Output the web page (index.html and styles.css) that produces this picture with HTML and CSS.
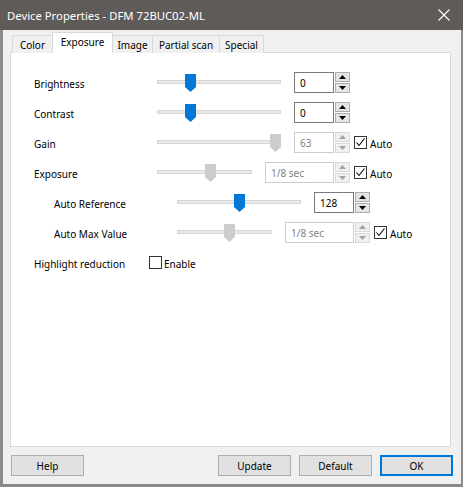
FILE: index.html
```html
<!DOCTYPE html>
<html>
<head>
<meta charset="utf-8">
<link rel="stylesheet" href="styles.css">
</head>
<body>
<div class="window">
  <div class="titlebar">
    <span class="title">Device Properties - DFM 72BUC02-ML</span>
    <svg class="close" width="12" height="12" viewBox="0 0 12 12"><path d="M0.5 0.5L11.5 11.5M11.5 0.5L0.5 11.5" stroke="#fff" stroke-width="1.1" fill="none"/></svg>
  </div>
  <div class="client">
    <div class="tabs">
      <div class="tab t-color">Color</div>
      <div class="tab t-exposure active">Exposure</div>
      <div class="tab t-image">Image</div>
      <div class="tab t-partial">Partial scan</div>
      <div class="tab t-special">Special</div>
    </div>
    <div class="panel">
      <div class="rows">
        <div class="row">
          <span class="label">Brightness</span>
          <div class="slider long"><div class="track"></div><svg class="thumb" style="left:28px" width="11" height="18" viewBox="0 0 11 18"><path d="M0 0H11V13L5.5 18L0 13Z" fill="#0078d7"/></svg></div>
          <div class="edit num">0</div>
          <div class="spin"><div class="sb"><svg width="7" height="4" viewBox="0 0 7 4"><path d="M0 4L3.5 0L7 4Z"/></svg></div><div class="sb"><svg width="7" height="4" viewBox="0 0 7 4"><path d="M0 0L3.5 4L7 0Z"/></svg></div></div>
        </div>
        <div class="row">
          <span class="label">Contrast</span>
          <div class="slider long"><div class="track"></div><svg class="thumb" style="left:28px" width="11" height="18" viewBox="0 0 11 18"><path d="M0 0H11V13L5.5 18L0 13Z" fill="#0078d7"/></svg></div>
          <div class="edit num">0</div>
          <div class="spin"><div class="sb"><svg width="7" height="4" viewBox="0 0 7 4"><path d="M0 4L3.5 0L7 4Z"/></svg></div><div class="sb"><svg width="7" height="4" viewBox="0 0 7 4"><path d="M0 0L3.5 4L7 0Z"/></svg></div></div>
        </div>
        <div class="row">
          <span class="label">Gain</span>
          <div class="slider long"><div class="track"></div><svg class="thumb" style="left:113px" width="11" height="18" viewBox="0 0 11 18"><path d="M0 0H11V13L5.5 18L0 13Z" fill="#cccccc"/></svg></div>
          <div class="edit num disabled">63</div>
          <div class="spin disabled"><div class="sb"><svg width="7" height="4" viewBox="0 0 7 4"><path d="M0 4L3.5 0L7 4Z"/></svg></div><div class="sb"><svg width="7" height="4" viewBox="0 0 7 4"><path d="M0 0L3.5 4L7 0Z"/></svg></div></div>
          <div class="check on"><svg width="13" height="13" viewBox="0 0 13 13"><path d="M2.5 6.5L5 9.5L10.5 2.5" stroke="#000" stroke-width="1.1" fill="none"/></svg></div>
          <span class="clabel">Auto</span>
        </div>
        <div class="row">
          <span class="label">Exposure</span>
          <div class="slider short"><div class="track"></div><svg class="thumb" style="left:48px" width="11" height="18" viewBox="0 0 11 18"><path d="M0 0H11V13L5.5 18L0 13Z" fill="#cccccc"/></svg></div>
          <div class="edit wide disabled">1/8 sec</div>
          <div class="spin disabled"><div class="sb"><svg width="7" height="4" viewBox="0 0 7 4"><path d="M0 4L3.5 0L7 4Z"/></svg></div><div class="sb"><svg width="7" height="4" viewBox="0 0 7 4"><path d="M0 0L3.5 4L7 0Z"/></svg></div></div>
          <div class="check on"><svg width="13" height="13" viewBox="0 0 13 13"><path d="M2.5 6.5L5 9.5L10.5 2.5" stroke="#000" stroke-width="1.1" fill="none"/></svg></div>
          <span class="clabel">Auto</span>
        </div>
        <div class="row sub">
          <span class="label">Auto Reference</span>
          <div class="slider long"><div class="track"></div><svg class="thumb" style="left:57px" width="11" height="18" viewBox="0 0 11 18"><path d="M0 0H11V13L5.5 18L0 13Z" fill="#0078d7"/></svg></div>
          <div class="edit num">128</div>
          <div class="spin"><div class="sb"><svg width="7" height="4" viewBox="0 0 7 4"><path d="M0 4L3.5 0L7 4Z"/></svg></div><div class="sb"><svg width="7" height="4" viewBox="0 0 7 4"><path d="M0 0L3.5 4L7 0Z"/></svg></div></div>
        </div>
        <div class="row sub">
          <span class="label">Auto Max Value</span>
          <div class="slider short"><div class="track"></div><svg class="thumb" style="left:47px" width="11" height="18" viewBox="0 0 11 18"><path d="M0 0H11V13L5.5 18L0 13Z" fill="#cccccc"/></svg></div>
          <div class="edit wide disabled">1/8 sec</div>
          <div class="spin disabled"><div class="sb"><svg width="7" height="4" viewBox="0 0 7 4"><path d="M0 4L3.5 0L7 4Z"/></svg></div><div class="sb"><svg width="7" height="4" viewBox="0 0 7 4"><path d="M0 0L3.5 4L7 0Z"/></svg></div></div>
          <div class="check on"><svg width="13" height="13" viewBox="0 0 13 13"><path d="M2.5 6.5L5 9.5L10.5 2.5" stroke="#000" stroke-width="1.1" fill="none"/></svg></div>
          <span class="clabel">Auto</span>
        </div>
        <div class="row">
          <span class="label hl">Highlight reduction</span>
          <div class="check"></div>
          <span class="clabel">Enable</span>
        </div>
      </div>
    </div>
    <div class="buttons">
      <div class="btn">Help</div>
      <div class="spacer"></div>
      <div class="btn">Update</div>
      <div class="btn">Default</div>
      <div class="btn default">OK</div>
    </div>
  </div>
</div>
</body>
</html>
```

FILE: styles.css
```css
* { box-sizing: border-box; }
html, body { margin: 0; padding: 0; }
body {
  font-family: "Noto Sans", "Open Sans", sans-serif;
  font-size: 10px;
  color: #000;
  background: #f0f0f0;
}
.window {
  width: 463px;
  height: 487px;
  display: flex;
  flex-direction: column;
  background: #f0f0f0;
}
.titlebar {
  height: 30px;
  flex: none;
  background: #5f5b58;
  display: flex;
  align-items: center;
  padding: 0 13px 0 7px;
  color: #fff;
}
.title { font-size: 11.3px; flex: 1; }
.close { flex: none; }
.client {
  flex: 1;
  display: flex;
  flex-direction: column;
  border-left: 3px solid #8a8a8a;
  border-right: 2px solid #8a8a8a;
  border-bottom: 3px solid #8a8a8a;
  padding: 3px 10px 0 7px;
}
.tabs {
  display: flex;
  align-items: flex-end;
  height: 20px;
  padding-left: 2px;
  position: relative;
  z-index: 1;
  margin-bottom: -1px;
}
.tab {
  height: 18px;
  border: 1px solid #d9d9d9;
  border-bottom: 0;
  border-left: 0;
  display: flex;
  align-items: center;
  justify-content: center;
  background: #f0f0f0;
}
.t-color { width: 41px; border-left: 1px solid #d9d9d9; }
.t-exposure { width: 60px; }
.t-image { width: 40px; }
.t-partial { width: 67px; }
.t-special { width: 44px; }
.tab.active {
  height: 21px;
  background: #fff;
  border-left: 1px solid #d9d9d9;
  margin-left: -1px;
  width: 61px;
  padding-bottom: 3px;
}
.panel {
  height: 395px;
  background: #fff;
  border: 1px solid #d9d9d9;
  padding: 19px 0 0 23px;
}
.rows { display: flex; flex-direction: column; gap: 9px; }
.row {
  display: flex;
  align-items: center;
  height: 21px;
}
.row.sub { padding-left: 20px; }
.label { width: 123px; flex: none; padding-top: 3px; }
.label.hl { width: 115px; }
.clabel { padding-top: 2px; }
.slider {
  position: relative;
  height: 21px;
  flex: none;
  margin-right: 13px;
}
.slider.long { width: 124px; }
.slider.short { width: 95px; }
.track {
  position: absolute;
  left: 0; right: 0;
  top: 8px;
  height: 4px;
  background: #e7eaea;
  border: 1px solid #d6d6d6;
}
.thumb { position: absolute; top: 2px; }
.edit {
  height: 21px;
  border: 1px solid #7a7a7a;
  padding-left: 5px;
  display: flex;
  align-items: center;
  flex: none;
}
.edit.num { width: 40px; }
.edit.wide { width: 69px; }
.edit.disabled { border-color: #cccccc; color: #838383; }
.spin {
  width: 15px;
  height: 21px;
  margin-left: 1px;
  display: flex;
  flex-direction: column;
  gap: 1px;
  flex: none;
}
.sb {
  flex: 1;
  background: #e5e5e5;
  border: 1px solid #adadad;
  display: flex;
  align-items: center;
  justify-content: center;
}
.sb svg { fill: #000; }
.spin.disabled .sb { background: #f0f0f0; border-color: #d9d9d9; }
.spin.disabled .sb svg { fill: #a3a3a3; }
.check {
  width: 13px;
  height: 13px;
  border: 1px solid #333;
  background: #fff;
  flex: none;
  margin-left: 4px;
  margin-right: 3px;
  position: relative;
}
.check svg { position: absolute; left: -1px; top: -1px; }
.row .label.hl + .check { margin-left: 0; margin-right: 2px; }
.buttons {
  display: flex;
  gap: 8px;
  padding: 8px 0 0 1px;
  margin-right: -2px;
}
.spacer { flex: 1; }
.btn {
  width: 73px;
  height: 21px;
  background: #e1e1e1;
  border: 1px solid #adadad;
  display: flex;
  align-items: center;
  justify-content: center;
}
.btn.default { border: 2px solid #0078d7; }
```
